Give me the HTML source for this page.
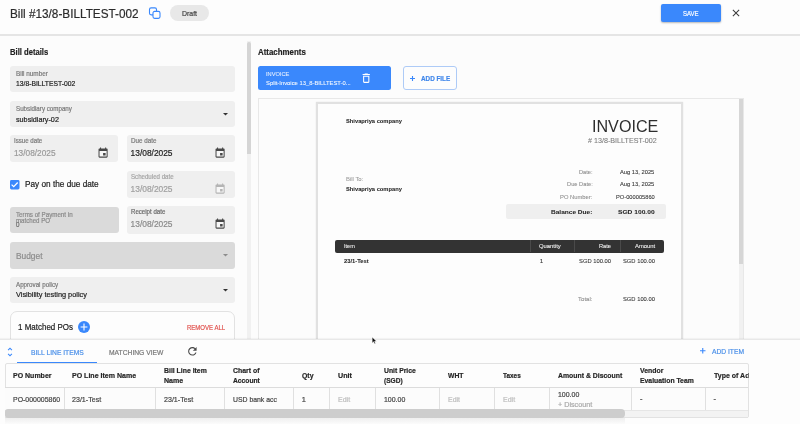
<!DOCTYPE html>
<html><head><meta charset="utf-8"><title>Bill</title>
<style>
*{box-sizing:border-box;margin:0;padding:0}
html,body{width:800px;height:424px;overflow:hidden;background:#fcfcfc;font-family:"Liberation Sans",sans-serif}
.a{position:absolute}
.t{-webkit-text-stroke:0.2px currentColor;position:absolute;white-space:pre;line-height:24px;display:block}
svg{position:absolute;overflow:visible}
#tx{position:absolute;left:0;top:0;width:800px;height:424px;will-change:transform}
.ns{-webkit-text-stroke:0 !important}
.ls{-webkit-text-stroke:0.08px currentColor !important}

</style></head><body>
<div class="a" style="left:0px;top:0px;width:800px;height:33.5px;background:#fdfdfd;"></div>
<div class="a" style="left:0px;top:33.6px;width:800px;height:2px;background:#e5e5e5;"></div>
<svg style="left:148px;top:6px" width="14" height="14" viewBox="0 0 14 14"><rect x="1.5" y="1.9" width="7" height="7" rx="1.6" fill="none" stroke="#3a88fc" stroke-width="1.1"/><rect x="5" y="5.4" width="7" height="7" rx="1.6" fill="#fdfdfd" stroke="#3a88fc" stroke-width="1.1"/></svg>
<div class="a" style="left:170px;top:5px;width:39px;height:16px;background:#e8e8e8;border-radius:8px"></div>
<div class="a" style="left:661px;top:4px;width:60px;height:18px;background:#3a88fc;border-radius:2px;box-shadow:0 1px 2px rgba(0,0,0,.28)"></div>
<svg style="left:729.90px;top:7.10px" width="12.00" height="12.00" viewBox="0 0 24 24"><path d="M19 6.41L17.59 5 12 10.59 6.41 5 5 6.41 10.59 12 5 17.59 6.41 19 12 13.41 17.59 19 19 17.59 13.41 12z" fill="#3a3a3a"/></svg>
<div class="a" style="left:10px;top:66.4px;width:225px;height:25.7px;background:#efefef;border-radius:3px"></div>
<div class="a" style="left:10px;top:100.9px;width:225px;height:25.7px;background:#efefef;border-radius:3px"></div>
<svg style="left:222.8px;top:112.5px" width="5" height="3" viewBox="0 0 5 3"><path d="M0 0 H5 L2.5 2.6 Z" fill="#333"/></svg>
<div class="a" style="left:10px;top:135px;width:108.3px;height:27.1px;background:#efefef;border-radius:3px"></div>
<div class="a" style="left:99.1px;top:150.7px;width:8.2px;height:6.2px;background:#f7f7f7;"></div>
<svg style="left:97.08px;top:146.59px" width="12.17" height="12.17" viewBox="0 0 24 24"><path d="M17 12h-5v5h5v-5zM16 1v2H8V1H6v2H5c-1.11 0-1.99.9-1.99 2L3 19c0 1.1.89 2 2 2h14c1.1 0 2-.9 2-2V5c0-1.1-.9-2-2-2h-1V1h-2zm3 18H5V8h14v11z" fill="#484848"/></svg>
<div class="a" style="left:127px;top:135px;width:108.2px;height:27.1px;background:#efefef;border-radius:3px"></div>
<div class="a" style="left:215.8px;top:150.7px;width:8.2px;height:6.2px;background:#f7f7f7;"></div>
<svg style="left:213.78px;top:146.59px" width="12.17" height="12.17" viewBox="0 0 24 24"><path d="M17 12h-5v5h5v-5zM16 1v2H8V1H6v2H5c-1.11 0-1.99.9-1.99 2L3 19c0 1.1.89 2 2 2h14c1.1 0 2-.9 2-2V5c0-1.1-.9-2-2-2h-1V1h-2zm3 18H5V8h14v11z" fill="#484848"/></svg>
<svg style="left:10px;top:180px" width="9.5" height="9.5" viewBox="0 0 9.5 9.5"><rect width="9.5" height="9.5" rx="1.4" fill="#3a88fc"/><path d="M1.6 4.6 L3.7 6.6 L7.7 2.5" stroke="#fff" stroke-width="1.25" fill="none"/></svg>
<div class="a" style="left:127px;top:170.8px;width:108.2px;height:27.1px;background:#efefef;border-radius:3px"></div>
<div class="a" style="left:215.8px;top:186.7px;width:8.2px;height:6.2px;background:#f7f7f7;"></div>
<svg style="left:213.78px;top:182.59px" width="12.17" height="12.17" viewBox="0 0 24 24"><path d="M17 12h-5v5h5v-5zM16 1v2H8V1H6v2H5c-1.11 0-1.99.9-1.99 2L3 19c0 1.1.89 2 2 2h14c1.1 0 2-.9 2-2V5c0-1.1-.9-2-2-2h-1V1h-2zm3 18H5V8h14v11z" fill="#b4b4b4"/></svg>
<div class="a" style="left:10px;top:206.8px;width:108.6px;height:26.6px;background:#dadada;border-radius:3px"></div>
<div class="a" style="left:127px;top:206.3px;width:108.2px;height:27.3px;background:#efefef;border-radius:3px"></div>
<div class="a" style="left:215.8px;top:222.1px;width:8.2px;height:6.2px;background:#f7f7f7;"></div>
<svg style="left:213.78px;top:217.99px" width="12.17" height="12.17" viewBox="0 0 24 24"><path d="M17 12h-5v5h5v-5zM16 1v2H8V1H6v2H5c-1.11 0-1.99.9-1.99 2L3 19c0 1.1.89 2 2 2h14c1.1 0 2-.9 2-2V5c0-1.1-.9-2-2-2h-1V1h-2zm3 18H5V8h14v11z" fill="#484848"/></svg>
<div class="a" style="left:10px;top:242px;width:225px;height:26.6px;background:#dadada;border-radius:3px"></div>
<svg style="left:222.8px;top:254px" width="5" height="3" viewBox="0 0 5 3"><path d="M0 0 H5 L2.5 2.6 Z" fill="#8c8c8c"/></svg>
<div class="a" style="left:10px;top:277px;width:225px;height:25.6px;background:#efefef;border-radius:3px"></div>
<svg style="left:222.8px;top:288.5px" width="5" height="3" viewBox="0 0 5 3"><path d="M0 0 H5 L2.5 2.6 Z" fill="#333"/></svg>
<div class="a" style="left:10px;top:311.3px;width:225.2px;height:40px;background:#fdfdfd;border:1px solid #e2e2e2;border-radius:7px"></div>
<svg style="left:77.8px;top:321.3px" width="12" height="12" viewBox="0 0 12 12"><circle cx="6" cy="6" r="6" fill="#3a88fc"/><path d="M6 2.6 V9.4 M2.6 6 H9.4" stroke="#fff" stroke-width="1.1"/></svg>
<div class="a" style="left:247px;top:41px;width:4px;height:299px;background:#f1f1f1;"></div>
<div class="a" style="left:247px;top:41.5px;width:4px;height:112.6px;background:#d5d5d5;border-radius:2px 2px 0 0"></div>
<div class="a" style="left:258px;top:66.3px;width:133.4px;height:23.5px;background:#3a88fc;border-radius:2.5px"></div>
<svg style="left:360.20px;top:71.94px" width="12.48" height="12.48" viewBox="0 0 24 24"><path d="M6 19c0 1.1.9 2 2 2h8c1.1 0 2-.9 2-2V7H6v12zM8 9h8v10H8V9zm7.5-5l-1-1h-5l-1 1H5v2h14V4h-3.500z" fill="#fff"/></svg>
<div class="a" style="left:403.2px;top:66.1px;width:53.4px;height:23.7px;background:#fdfdfd;border:1px solid #aecbf7;border-radius:3px"></div>
<svg style="left:409.5px;top:75.5px" width="5" height="5" viewBox="0 0 5 5"><path d="M2.5 0 V5 M0 2.5 H5" stroke="#3a88fc" stroke-width="1.1"/></svg>
<div class="a" style="left:258px;top:98px;width:486px;height:243px;background:#fcfcfc;border:1px solid #e8e8e8"></div>
<div class="a" style="left:316px;top:102px;width:367px;height:240px;background:#fdfdfd;border:2px solid #e1e1e1;box-shadow:0 0 1.5px rgba(0,0,0,.10)"></div>
<div class="a" style="left:739.4px;top:99px;width:3.9px;height:241px;background:#f1f1f1;"></div>
<div class="a" style="left:739.4px;top:99px;width:3.9px;height:165.2px;background:#d6d6d6;"></div>
<div class="a" style="left:506.2px;top:204.1px;width:159.7px;height:15px;background:#efefef;border-radius:2px"></div>
<div class="a" style="left:334.9px;top:240.1px;width:329.2px;height:12.6px;background:#333;border-radius:2px"></div>
<div class="a" style="left:530.4px;top:240.1px;width:0.6px;height:12.4px;background:#4a4a4a;"></div>
<div class="a" style="left:574.3px;top:240.1px;width:0.6px;height:12.4px;background:#4a4a4a;"></div>
<div class="a" style="left:619.5px;top:240.1px;width:0.6px;height:12.4px;background:#4a4a4a;"></div>
<div class="a" style="left:0px;top:339.3px;width:800px;height:85px;background:#fdfdfd;box-shadow:0 -1px 1px rgba(0,0,0,.04);border-top:1px solid #e8e8e8"></div>
<svg style="left:4.39px;top:345.60px" width="12.00" height="12.00" viewBox="0 0 24 24"><path d="M12 5.83L15.17 9l1.41-1.41L12 3 7.41 7.59 8.83 9 12 5.83zm0 12.34L8.83 15l-1.41 1.41L12 21l4.59-4.59L15.17 15 12 18.170z" fill="#3a88fc"/></svg>
<div class="a" style="left:17.3px;top:362px;width:79.3px;height:1.8px;background:#3a88fc;"></div>
<svg style="left:185.88px;top:345.48px" width="12.72" height="12.72" viewBox="0 0 24 24"><path d="M17.65 6.35C16.2 4.9 14.21 4 12 4c-4.42 0-7.99 3.58-7.99 8s3.57 8 7.99 8c3.73 0 6.84-2.55 7.73-6h-2.08c-.82 2.33-3.04 4-5.65 4-3.31 0-6-2.69-6-6s2.690-6 6-6c1.66 0 3.14.69 4.22 1.78L13 11h7V4l-2.35 2.35z" fill="#484848"/></svg>
<svg style="left:700.2px;top:348.2px" width="5.5" height="5.5" viewBox="0 0 5.5 5.5"><path d="M2.75 0 V5.5 M0 2.75 H5.5" stroke="#3a88fc" stroke-width="1.1"/></svg>
<div class="a" style="left:4.5px;top:363.4px;width:744px;height:54.8px;background:#fdfdfd;border:1px solid #e2e2e2;border-radius:2px"></div>
<div class="a" style="left:5px;top:387.2px;width:743px;height:1px;background:#dcdcdc;"></div>
<div class="a" style="left:5px;top:388.2px;width:743px;height:21.6px;background:#fcfcfc;"></div>
<div class="a" style="left:63.9px;top:388px;width:0.9px;height:22px;background:#e0e0e0;"></div>
<div class="a" style="left:155.0px;top:388px;width:0.9px;height:22px;background:#e0e0e0;"></div>
<div class="a" style="left:224.0px;top:388px;width:0.9px;height:22px;background:#e0e0e0;"></div>
<div class="a" style="left:293.3px;top:388px;width:0.9px;height:22px;background:#e0e0e0;"></div>
<div class="a" style="left:329.0px;top:388px;width:0.9px;height:22px;background:#e0e0e0;"></div>
<div class="a" style="left:374.90000000000003px;top:388px;width:0.9px;height:22px;background:#e0e0e0;"></div>
<div class="a" style="left:439.0px;top:388px;width:0.9px;height:22px;background:#e0e0e0;"></div>
<div class="a" style="left:494.1px;top:388px;width:0.9px;height:22px;background:#e0e0e0;"></div>
<div class="a" style="left:548.9px;top:388px;width:0.9px;height:22px;background:#e0e0e0;"></div>
<div class="a" style="left:631.1px;top:388px;width:0.9px;height:22px;background:#e0e0e0;"></div>
<div class="a" style="left:705.1px;top:388px;width:0.9px;height:22px;background:#e0e0e0;"></div>
<div class="a" style="left:5px;top:409.8px;width:743px;height:8px;background:#f3f3f3;border-top:1px solid #e6e6e6;border-bottom:1px solid #e2e2e2"></div>
<div class="a" style="left:5px;top:418px;width:620px;height:6px;background:linear-gradient(#e9e9e9,#fbfbfb);opacity:.7"></div>
<div class="a" style="left:5px;top:409.4px;width:620.4px;height:8.6px;background:#cdcdcd;border-radius:3px 4px 4px 3px"></div>
<div class="a" style="left:748.5px;top:364px;width:51.5px;height:54.5px;background:#fdfdfd;"></div>
<svg style="left:371.9px;top:336.9px" width="5.2" height="7.4" viewBox="0 0 7 10"><path d="M0.3 0.3 V8 L2.2 6.3 L3.5 9.3 L4.7 8.8 L3.4 5.9 H6 Z" fill="#111" stroke="#fff" stroke-width="0.5"/></svg>
<div id="tx">
<span class="t" style="top:2px;font-size:13.4px;color:#2b2b2b;left:10.40px;transform-origin:0 0;transform:scaleX(0.8785);">Bill #13/8-BILLTEST-002</span>
<span class="t" style="top:2px;font-size:6.8px;color:#444;left:182.00px;transform-origin:0 0;transform:scaleX(1.0180);">Draft</span>
<span class="t" style="top:2px;font-size:7.7px;color:#fff;left:682.90px;transform-origin:0 0;transform:scaleX(0.7818);">SAVE</span>
<span class="t" style="top:40px;font-size:8.7px;color:#222;font-weight:bold;left:9.80px;transform-origin:0 0;transform:scaleX(0.8791);">Bill details</span>
<span class="t" style="top:62px;font-size:6.5px;color:#7a7a7a;left:15.70px;transform-origin:0 0;transform:scaleX(0.9811);">Bill number</span>
<span class="t" style="top:72px;font-size:7.5px;color:#222;left:15.70px;transform-origin:0 0;transform:scaleX(0.9021);">13/8-BILLTEST-002</span>
<span class="t" style="top:97px;font-size:6.5px;color:#7a7a7a;left:15.70px;transform-origin:0 0;transform:scaleX(0.9550);">Subsidiary company</span>
<span class="t" style="top:108px;font-size:7.5px;color:#222;left:15.70px;transform-origin:0 0;transform:scaleX(0.9617);">subsidiary-02</span>
<span class="t" style="top:129px;font-size:6.5px;color:#7a7a7a;left:13.75px;transform-origin:0 0;transform:scaleX(0.9417);">Issue date</span>
<span class="t" style="top:141px;font-size:8.4px;color:#9a9a9a;left:13.75px;transform-origin:0 0;transform:scaleX(0.9911);">13/08/2025</span>
<span class="t" style="top:129px;font-size:6.5px;color:#7a7a7a;left:130.60px;transform-origin:0 0;transform:scaleX(0.9625);">Due date</span>
<span class="t" style="top:141px;font-size:8.4px;color:#1e1e1e;left:130.60px;transform-origin:0 0;">13/08/2025</span>
<span class="t" style="top:172px;font-size:8.7px;color:#222;left:25.20px;transform-origin:0 0;transform:scaleX(0.9475);">Pay on the due date</span>
<span class="t" style="top:165px;font-size:6.5px;color:#a5a5a5;left:130.60px;transform-origin:0 0;transform:scaleX(0.9427);">Scheduled date</span>
<span class="t" style="top:177px;font-size:8.4px;color:#a0a0a0;left:130.60px;transform-origin:0 0;">13/08/2025</span>
<span class="t" style="top:203px;font-size:6.5px;color:#8a8a8a;left:15.80px;transform-origin:0 0;transform:scaleX(0.9553);">Terms of Payment in</span>
<span class="t" style="top:209px;font-size:6.5px;color:#8a8a8a;left:15.80px;transform-origin:0 0;transform:scaleX(0.9408);">matched PO</span>
<span class="t" style="top:213px;font-size:7.5px;color:#6a6a6a;left:15.90px;transform-origin:0 0;transform:scaleX(0.8390);">0</span>
<span class="t" style="top:200px;font-size:6.5px;color:#6a6a6a;left:130.60px;transform-origin:0 0;transform:scaleX(0.9397);">Receipt date</span>
<span class="t" style="top:212px;font-size:8.4px;color:#8a8a8a;left:130.60px;transform-origin:0 0;">13/08/2025</span>
<span class="t" style="top:244px;font-size:8.7px;color:#8c8c8c;left:15.80px;transform-origin:0 0;transform:scaleX(0.9620);">Budget</span>
<span class="t" style="top:273px;font-size:6.5px;color:#7a7a7a;left:15.80px;transform-origin:0 0;transform:scaleX(0.9551);">Approval policy</span>
<span class="t" style="top:283px;font-size:7.5px;color:#222;left:15.80px;transform-origin:0 0;transform:scaleX(0.9792);">Visibility testing policy</span>
<span class="t" style="top:315px;font-size:8.7px;color:#222;left:18.40px;transform-origin:0 0;transform:scaleX(0.9183);">1 Matched POs</span>
<span class="t" style="top:316px;font-size:7.2px;color:#e0514d;left:186.70px;transform-origin:0 0;transform:scaleX(0.8365);">REMOVE ALL</span>
<span class="t" style="top:40px;font-size:8.7px;color:#222;font-weight:bold;left:258.25px;transform-origin:0 0;transform:scaleX(0.9093);">Attachments</span>
<span class="t ls" style="top:62px;font-size:6.2px;color:#e6efff;left:266.00px;transform-origin:0 0;transform:scaleX(0.9154);">INVOICE</span>
<span class="t ls" style="top:71px;font-size:6.2px;color:#f4f8ff;left:266.00px;transform-origin:0 0;transform:scaleX(0.9447);">Split-Invoice 13_8-BILLTEST-0...</span>
<span class="t" style="top:67px;font-size:7.4px;color:#3f86ea;font-weight:bold;left:421.00px;transform-origin:0 0;transform:scaleX(0.8569);">ADD FILE</span>
<span class="t ls" style="top:109px;font-size:6.2px;color:#2a2a2a;font-weight:bold;left:346.20px;transform-origin:0 0;transform:scaleX(0.9288);">Shivapriya company</span>
<span class="t ls" style="top:167px;font-size:6.2px;color:#9a9a9a;left:346.20px;transform-origin:0 0;transform:scaleX(0.9545);">Bill To:</span>
<span class="t ls" style="top:177px;font-size:6.2px;color:#2a2a2a;font-weight:bold;left:346.20px;transform-origin:0 0;transform:scaleX(0.9288);">Shivapriya company</span>
<span class="t ns" style="top:115px;font-size:17px;color:#2e2e2e;left:592.30px;transform-origin:0 0;transform:scaleX(0.9484);">INVOICE</span>
<span class="t ls" style="top:129px;font-size:7.1px;color:#7c7c7c;left:588.30px;transform-origin:0 0;transform:scaleX(1.0104);"># 13/8-BILLTEST-002</span>
<span class="t ls" style="top:160px;font-size:6.2px;color:#8c8c8c;left:578.70px;transform-origin:0 0;transform:scaleX(0.9191);">Date:</span>
<span class="t ls" style="top:160px;font-size:6.2px;color:#333;left:620.30px;transform-origin:0 0;transform:scaleX(0.9314);">Aug 13, 2025</span>
<span class="t ls" style="top:172px;font-size:6.2px;color:#8c8c8c;left:566.50px;transform-origin:0 0;transform:scaleX(0.9261);">Due Date:</span>
<span class="t ls" style="top:172px;font-size:6.2px;color:#333;left:620.30px;transform-origin:0 0;transform:scaleX(0.9314);">Aug 13, 2025</span>
<span class="t ls" style="top:185px;font-size:6.2px;color:#8c8c8c;left:560.00px;transform-origin:0 0;transform:scaleX(0.9392);">PO Number:</span>
<span class="t ls" style="top:185px;font-size:6.2px;color:#333;left:615.80px;transform-origin:0 0;transform:scaleX(0.9242);">PO-000005860</span>
<span class="t ls" style="top:200px;font-size:6.2px;color:#2a2a2a;font-weight:bold;left:551.00px;transform-origin:0 0;transform:scaleX(1.0535);">Balance Due:</span>
<span class="t ls" style="top:200px;font-size:6.2px;color:#2a2a2a;font-weight:bold;left:618.30px;transform-origin:0 0;transform:scaleX(1.0745);">SGD 100.00</span>
<span class="t ls" style="top:234px;font-size:6.2px;color:#f2f2f2;left:344.10px;transform-origin:0 0;transform:scaleX(0.8965);">Item</span>
<span class="t ls" style="top:234px;font-size:6.2px;color:#f2f2f2;left:538.90px;transform-origin:0 0;transform:scaleX(0.9459);">Quantity</span>
<span class="t ls" style="top:234px;font-size:6.2px;color:#f2f2f2;left:598.50px;transform-origin:0 0;transform:scaleX(0.9176);">Rate</span>
<span class="t ls" style="top:234px;font-size:6.2px;color:#f2f2f2;left:635.00px;transform-origin:0 0;transform:scaleX(0.9471);">Amount</span>
<span class="t ls" style="top:249px;font-size:6.2px;color:#2a2a2a;font-weight:bold;left:344.10px;transform-origin:0 0;transform:scaleX(0.9365);">23/1-Test</span>
<span class="t ls" style="top:249px;font-size:6.2px;color:#333;left:539.80px;transform-origin:0 0;">1</span>
<span class="t ls" style="top:249px;font-size:6.2px;color:#333;left:578.70px;transform-origin:0 0;transform:scaleX(0.9394);">SGD 100.00</span>
<span class="t ls" style="top:249px;font-size:6.2px;color:#333;left:623.30px;transform-origin:0 0;transform:scaleX(0.9365);">SGD 100.00</span>
<span class="t ls" style="top:287px;font-size:6.2px;color:#8c8c8c;left:578.00px;transform-origin:0 0;transform:scaleX(0.9799);">Total:</span>
<span class="t ls" style="top:287px;font-size:6.2px;color:#333;left:623.30px;transform-origin:0 0;transform:scaleX(0.9365);">SGD 100.00</span>
<span class="t" style="top:341px;font-size:7.4px;color:#4a8fe8;left:30.70px;transform-origin:0 0;transform:scaleX(0.9094);">BILL LINE ITEMS</span>
<span class="t" style="top:341px;font-size:7.4px;color:#777;left:108.90px;transform-origin:0 0;transform:scaleX(0.9095);">MATCHING VIEW</span>
<span class="t" style="top:340px;font-size:7.4px;color:#4a8fe8;left:712.30px;transform-origin:0 0;transform:scaleX(0.9062);">ADD ITEM</span>
<span class="t" style="top:364px;font-size:7.4px;color:#262626;font-weight:bold;left:12.90px;transform-origin:0 0;transform:scaleX(0.9470);">PO Number</span>
<span class="t" style="top:364px;font-size:7.4px;color:#262626;font-weight:bold;left:72.40px;transform-origin:0 0;transform:scaleX(0.9516);">PO Line Item Name</span>
<span class="t" style="top:359px;font-size:7.4px;color:#262626;font-weight:bold;left:164.00px;transform-origin:0 0;transform:scaleX(0.9304);">Bill Line Item</span>
<span class="t" style="top:369px;font-size:7.4px;color:#262626;font-weight:bold;left:164.00px;transform-origin:0 0;transform:scaleX(0.9533);">Name</span>
<span class="t" style="top:359px;font-size:7.4px;color:#262626;font-weight:bold;left:232.50px;transform-origin:0 0;transform:scaleX(0.9350);">Chart of</span>
<span class="t" style="top:369px;font-size:7.4px;color:#262626;font-weight:bold;left:232.50px;transform-origin:0 0;transform:scaleX(0.9061);">Account</span>
<span class="t" style="top:364px;font-size:7.4px;color:#262626;font-weight:bold;left:301.60px;transform-origin:0 0;transform:scaleX(0.9328);">Qty</span>
<span class="t" style="top:364px;font-size:7.4px;color:#262626;font-weight:bold;left:337.80px;transform-origin:0 0;transform:scaleX(0.9670);">Unit</span>
<span class="t" style="top:359px;font-size:7.4px;color:#262626;font-weight:bold;left:383.70px;transform-origin:0 0;transform:scaleX(0.9217);">Unit Price</span>
<span class="t" style="top:369px;font-size:7.4px;color:#262626;font-weight:bold;left:383.70px;transform-origin:0 0;transform:scaleX(0.8925);">(SGD)</span>
<span class="t" style="top:364px;font-size:7.4px;color:#262626;font-weight:bold;left:447.80px;transform-origin:0 0;transform:scaleX(0.9211);">WHT</span>
<span class="t" style="top:364px;font-size:7.4px;color:#262626;font-weight:bold;left:502.90px;transform-origin:0 0;transform:scaleX(0.8716);">Taxes</span>
<span class="t" style="top:364px;font-size:7.4px;color:#262626;font-weight:bold;left:557.70px;transform-origin:0 0;transform:scaleX(0.9321);">Amount &amp; Discount</span>
<span class="t" style="top:359px;font-size:7.4px;color:#262626;font-weight:bold;left:640.10px;transform-origin:0 0;transform:scaleX(0.9337);">Vendor</span>
<span class="t" style="top:369px;font-size:7.4px;color:#262626;font-weight:bold;left:640.10px;transform-origin:0 0;transform:scaleX(0.9246);">Evaluation Team</span>
<span class="t" style="top:388px;font-size:7.4px;color:#444;left:12.90px;transform-origin:0 0;transform:scaleX(0.9414);">PO-000005860</span>
<span class="t" style="top:388px;font-size:7.4px;color:#444;left:72.40px;transform-origin:0 0;transform:scaleX(0.9603);">23/1-Test</span>
<span class="t" style="top:388px;font-size:7.4px;color:#444;left:164.00px;transform-origin:0 0;transform:scaleX(0.9603);">23/1-Test</span>
<span class="t" style="top:388px;font-size:7.4px;color:#444;left:232.50px;transform-origin:0 0;transform:scaleX(0.9291);">USD bank acc</span>
<span class="t" style="top:388px;font-size:7.4px;color:#444;left:301.80px;transform-origin:0 0;">1</span>
<span class="t" style="top:388px;font-size:7.4px;color:#bdbdbd;left:337.80px;transform-origin:0 0;transform:scaleX(0.9490);">Edit</span>
<span class="t" style="top:388px;font-size:7.4px;color:#444;left:383.70px;transform-origin:0 0;transform:scaleX(0.9421);">100.00</span>
<span class="t" style="top:388px;font-size:7.4px;color:#bdbdbd;left:447.80px;transform-origin:0 0;transform:scaleX(0.9412);">Edit</span>
<span class="t" style="top:388px;font-size:7.4px;color:#bdbdbd;left:502.90px;transform-origin:0 0;transform:scaleX(0.9490);">Edit</span>
<span class="t" style="top:383px;font-size:7.4px;color:#444;left:557.70px;transform-origin:0 0;transform:scaleX(0.9421);">100.00</span>
<span class="t" style="top:393px;font-size:7.4px;color:#a8a8a8;left:557.70px;transform-origin:0 0;transform:scaleX(0.9737);">+ Discount</span>
<span class="t" style="top:387px;font-size:7.4px;color:#444;left:640.10px;transform-origin:0 0;">-</span>
<span class="t" style="top:387px;font-size:7.4px;color:#444;left:713.60px;transform-origin:0 0;">-</span>
<span class="t" style="top:364px;font-size:7.4px;color:#262626;font-weight:bold;left:713.60px;transform-origin:0 0;clip-path:inset(0 2.95px 0 0);transform:scaleX(0.9487);">Type of Adj</span>
</div>
</body></html>
